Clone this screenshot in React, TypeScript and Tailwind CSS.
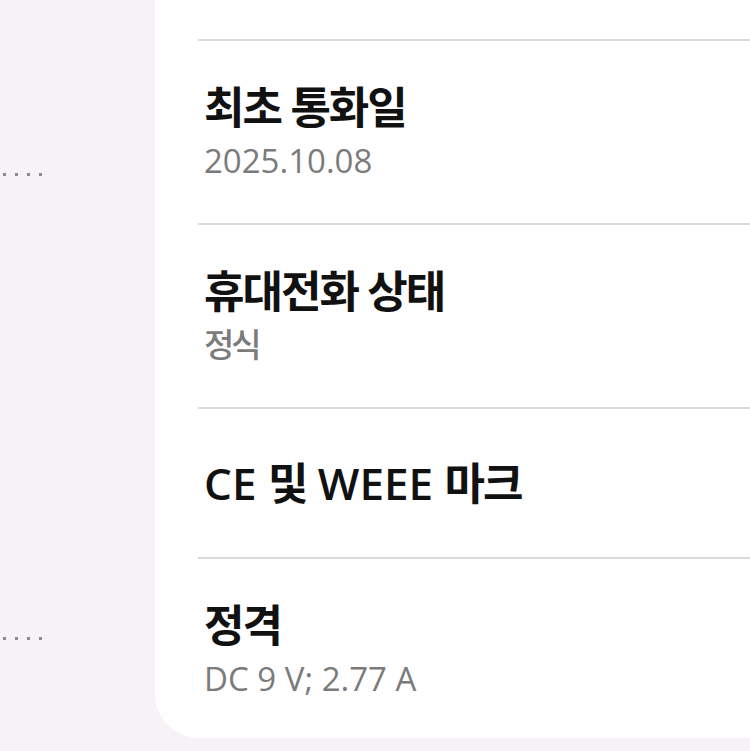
const Dots = () => (
  <div className="flex gap-[9px] pl-[3px]">
    <span className="w-[3px] h-[3px] bg-[#8c8c8c]"></span>
    <span className="w-[3px] h-[3px] bg-[#8c8c8c]"></span>
    <span className="w-[3px] h-[3px] bg-[#8c8c8c]"></span>
    <span className="w-[3px] h-[3px] bg-[#8c8c8c]"></span>
  </div>
);

const Divider = () => <div className="h-[2px] bg-[#dadada]"></div>;

const Ko = ({ children }: { children: React.ReactNode }) => (
  <span className="tracking-[-2px]">{children}</span>
);

type ItemProps = {
  title: React.ReactNode;
  value?: React.ReactNode;
};

function InfoItem({ title, value }: ItemProps) {
  return (
    <div className={value ? "pl-[6px] pt-[40px] pb-[40px]" : "pl-[6px] pt-[48px] pb-[48px]"}>
      <div className="text-[44px] leading-[52px] font-semibold text-[#111111]">{title}</div>
      {value && (
        <div className="mt-[6px] text-[33px] leading-[44px] font-medium text-[#7b7b7b]">
          {value}
        </div>
      )}
    </div>
  );
}

export default function App() {
  return (
    <div className="flex w-[750px] h-[751px] bg-[#f6f2f6] overflow-hidden font-['Open_Sans','Noto_Sans_CJK_KR',sans-serif]">
      <div className="w-[155px] shrink-0 flex flex-col pt-[173px]">
        <Dots />
        <div className="mt-[461px]">
          <Dots />
        </div>
      </div>

      <div className="flex-1 h-[738px] bg-white rounded-bl-[44px] pl-[43px] pt-[39px] overflow-hidden">
        <Divider />
        <InfoItem title={<Ko>최초 통화일</Ko>} value="2025.10.08" />
        <Divider />
        <InfoItem
          title={<Ko>휴대전화 상태</Ko>}
          value={<span className="tracking-[-3px]">정식</span>}
        />
        <Divider />
        <InfoItem
          title={
            <>
              CE <Ko>및</Ko> WEEE <Ko>마크</Ko>
            </>
          }
        />
        <Divider />
        <InfoItem title={<Ko>정격</Ko>} value="DC 9 V; 2.77 A" />
      </div>
    </div>
  );
}
